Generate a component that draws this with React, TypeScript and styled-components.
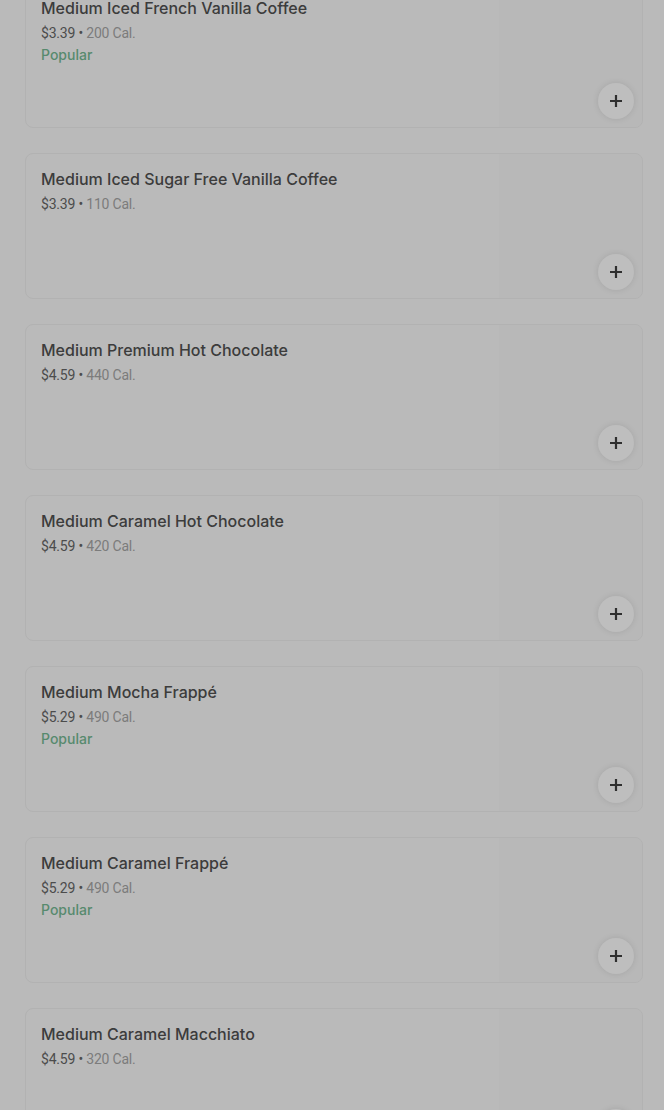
import React from "react";
import styled, { createGlobalStyle } from "styled-components";

const Global = createGlobalStyle`
  html, body { margin: 0; padding: 0; background: #bababa; }
  body { font-family: Roboto, "Noto Sans", Arial, sans-serif; overflow: hidden; }
`;

const Page = styled.div`
  width: 664px;
  height: 1110px;
  overflow: hidden;
  background: #bababa;
`;

const List = styled.ul`
  list-style: none;
  margin: -18px 0 0 0;
  padding: 0 21px 0 25px;
  display: flex;
  flex-direction: column;
  gap: 25px;
`;

const Card = styled.li`
  display: flex;
  height: 146px;
  box-sizing: border-box;
  border: 1px solid #b2b2b2;
  border-radius: 8px;
  background: #bababa;
  overflow: hidden;
`;

const Info = styled.div`
  flex: 1;
  padding: 15px 16px 0 15px;
  display: flex;
  flex-direction: column;
`;

const Title = styled.div`
  font-family: Inter, Roboto, sans-serif;
  font-size: 16px;
  line-height: 20px;
  font-weight: 500;
  color: #3c3c3c;
`;

const Meta = styled.div`
  margin-top: 4px;
  font-size: 14px;
  line-height: 22px;
  color: #4c4c4c;
  letter-spacing: -0.2px;
`;

const Cal = styled.span`
  color: #7c7c7c;
`;

const Badge = styled.div`
  font-family: Inter, Roboto, sans-serif;
  font-size: 14px;
  line-height: 22px;
  font-weight: 500;
  color: #578a6e;
`;

const Thumb = styled.div`
  position: relative;
  width: 143px;
  flex-shrink: 0;
  background: #b8b8b8;
`;

const AddButton = styled.button`
  position: absolute;
  right: 8px;
  bottom: 8px;
  width: 36px;
  height: 36px;
  border-radius: 50%;
  border: none;
  padding: 0;
  background: #bebebe;
  box-shadow: 0 0 6px rgba(0, 0, 0, 0.1);
  display: flex;
  align-items: center;
  justify-content: center;
  cursor: pointer;
`;

type Item = { name: string; price: string; cal: string; popular?: boolean };

const items: Item[] = [
  { name: "Medium Iced French Vanilla Coffee", price: "$3.39", cal: "200 Cal.", popular: true },
  { name: "Medium Iced Sugar Free Vanilla Coffee", price: "$3.39", cal: "110 Cal." },
  { name: "Medium Premium Hot Chocolate", price: "$4.59", cal: "440 Cal." },
  { name: "Medium Caramel Hot Chocolate", price: "$4.59", cal: "420 Cal." },
  { name: "Medium Mocha Frappé", price: "$5.29", cal: "490 Cal.", popular: true },
  { name: "Medium Caramel Frappé", price: "$5.29", cal: "490 Cal.", popular: true },
  { name: "Medium Caramel Macchiato", price: "$4.59", cal: "320 Cal." },
];

const Plus = () => (
  <svg width="12" height="12" viewBox="0 0 12 12" aria-hidden>
    <path d="M6 1v10M1 6h10" stroke="#2f2f2f" strokeWidth="2.2" strokeLinecap="square" />
  </svg>
);

export default function App() {
  return (
    <Page>
      <Global />
      <List>
        {items.map((it) => (
          <Card key={it.name}>
            <Info>
              <Title>{it.name}</Title>
              <Meta>
                {it.price} • <Cal>{it.cal}</Cal>
              </Meta>
              {it.popular && <Badge>Popular</Badge>}
            </Info>
            <Thumb>
              <AddButton aria-label="Add">
                <Plus />
              </AddButton>
            </Thumb>
          </Card>
        ))}
      </List>
    </Page>
  );
}
